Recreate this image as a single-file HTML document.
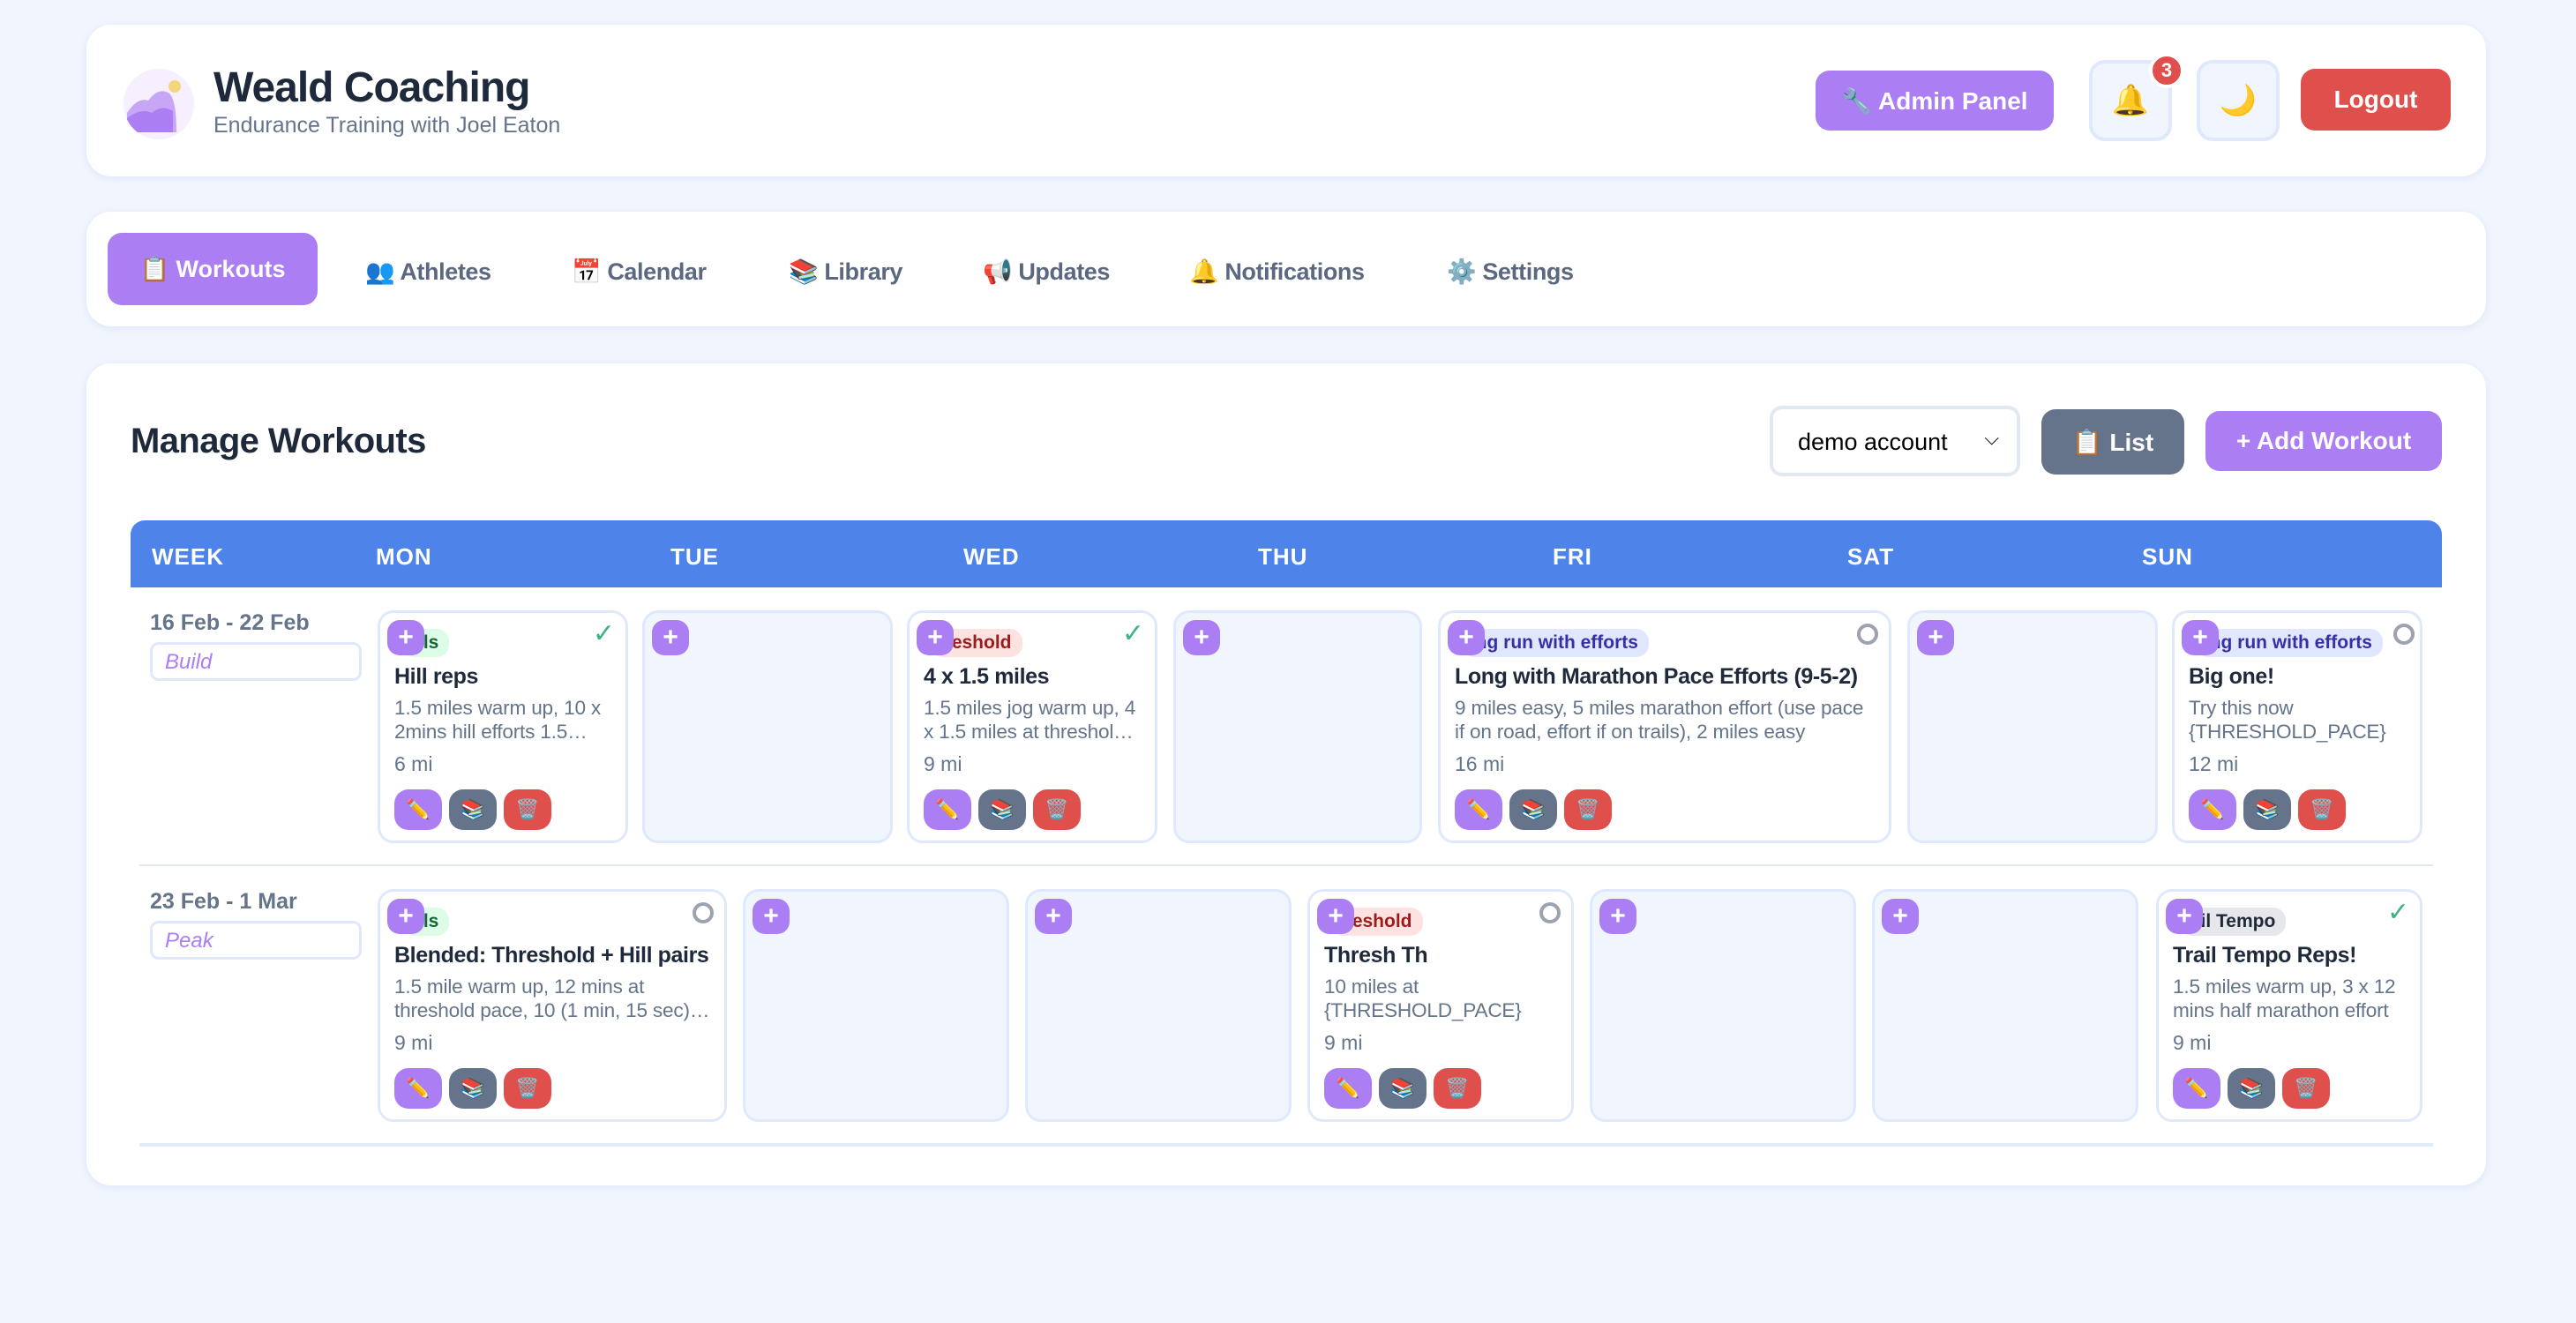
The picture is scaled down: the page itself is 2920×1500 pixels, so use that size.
<!DOCTYPE html>
<html><head><meta charset="utf-8"><style>
html{zoom:2}
*{box-sizing:border-box;margin:0;padding:0}
body{width:1460px;height:750px;background:#f0f5fe;font-family:"Liberation Sans","DejaVu Sans",sans-serif;position:relative;overflow:hidden;color:#1e293b}
.card{position:absolute;left:49px;width:1360px;background:#fff;border-radius:14px;box-shadow:0 1px 4px rgba(100,130,200,.12)}
.abs{position:absolute}
.btn{position:absolute;border-radius:8px;color:#fff;font-weight:bold;font-size:14px;display:flex;align-items:center;justify-content:center}
.tab{position:absolute;top:146px;font-size:13.5px;font-weight:bold;color:#5b6880;letter-spacing:-.2px}
.hd{position:absolute;top:308px;font-size:13px;font-weight:bold;color:#fff;letter-spacing:.5px}
.c{position:absolute;border:1.5px solid #dfe9fb;border-radius:9px;background:#fff;height:132px}
.c.e{background:#f0f5fe}
.pl{position:absolute;left:4px;top:4px;width:21px;height:20px;border-radius:7px;background:#ab7ef3;color:#fff;font-weight:bold;font-size:15px;line-height:20px;text-align:center;z-index:2}
.tg{position:absolute;left:12px;top:9px;height:16px;border-radius:7px;font-size:10.5px;font-weight:bold;line-height:16px;padding:0 6px 0 0;overflow:hidden;white-space:nowrap}
.tg span{display:inline-block}
.g{background:#dcfce7;color:#166534}.r{background:#fde2e2;color:#9b1c1c}.b{background:#e0e7ff;color:#3730a3}.n{background:#e5e7eb;color:#1f2937}
.t{position:absolute;left:8px;top:29px;font-size:12.5px;font-weight:bold;color:#1e293b;white-space:nowrap;letter-spacing:-.2px}
.d{position:absolute;left:8px;right:8px;top:47px;font-size:11.3px;line-height:13.5px;color:#64748b;display:-webkit-box;-webkit-line-clamp:2;-webkit-box-orient:vertical;overflow:hidden;letter-spacing:-.1px}
.m{position:absolute;left:8px;top:79px;font-size:11.5px;color:#64748b}
.bt{position:absolute;top:100px;left:8px;display:flex;gap:4px}
.bt i{width:27px;height:23px;border-radius:8px;font-style:normal;font-size:11px;display:flex;align-items:center;justify-content:center}
.ok{position:absolute;right:6px;top:3px;color:#3fb37f;font-size:15px;font-weight:bold}
.o{position:absolute;right:6px;top:6px;width:12px;height:12px;border:2px solid #9ca3af;border-radius:50%}
.wk{position:absolute;left:85px;font-size:12.5px;font-weight:bold;color:#64748b}
.ph{position:absolute;left:85px;width:120px;height:22px;border:1.5px solid #dfe9fb;border-radius:5px;font-size:12px;font-style:italic;color:#ab7ef3;padding:3px 7px}
</style></head><body>
<div class="card" style="top:14px;height:86px"></div>
<div class="abs" style="left:70px;top:39px;width:40px;height:40px;border-radius:50%;background:#f5efff;overflow:hidden">
<svg width="40" height="40" viewBox="0 0 40 40"><circle cx="29" cy="10" r="3.5" fill="#f6d57a"/><path d="M2 36 L2 25 Q8 16 14 18 Q20 10 26 14 Q30 18 30 36Z" fill="#c7a6f6"/><path d="M2 36 L2 28 Q10 22 16 25 Q22 20 28 24 L28 36Z" fill="#ab7ef3"/></svg></div>
<div class="abs" style="left:121px;top:36px;font-size:24px;font-weight:bold;color:#1e293b;letter-spacing:-.5px">Weald Coaching</div>
<div class="abs" style="left:121px;top:64px;font-size:12.5px;color:#64748b">Endurance Training with Joel Eaton</div>
<div class="btn" style="left:1029px;top:40px;width:135px;height:34px;background:#ab7ef3;font-size:14px">🔧 Admin Panel</div>
<div class="abs" style="left:1184px;top:34px;width:47px;height:46px;border:2px solid #dfe9fb;background:#f0f5fe;border-radius:9px;text-align:center;line-height:42px;font-size:17px;color:#d4a017">🔔</div>
<div class="abs" style="left:1218px;top:30px;width:20px;height:20px;border-radius:50%;background:#df4f4b;border:2px solid #fff;color:#fff;font-size:11px;font-weight:bold;text-align:center;line-height:16px">3</div>
<div class="abs" style="left:1245px;top:34px;width:47px;height:46px;border:2px solid #dfe9fb;background:#f0f5fe;border-radius:9px;text-align:center;line-height:42px;font-size:17px;color:#e9c53d">🌙</div>
<div class="btn" style="left:1304px;top:39px;width:85px;height:35px;background:#df504c;font-size:14px">Logout</div>

<div class="card" style="top:120px;height:65px"></div>
<div class="btn" style="left:61px;top:132px;width:119px;height:41px;background:#ab7ef3;font-size:13.5px">📋 Workouts</div>
<div class="tab" style="left:207px">👥 Athletes</div>
<div class="tab" style="left:324px">📅 Calendar</div>
<div class="tab" style="left:447px">📚 Library</div>
<div class="tab" style="left:557px">📢 Updates</div>
<div class="tab" style="left:674px">🔔 Notifications</div>
<div class="tab" style="left:820px">⚙️ Settings</div>

<div class="card" style="top:206px;height:466px"></div>
<div class="abs" style="left:74px;top:239px;font-size:20px;font-weight:bold;color:#1e293b;letter-spacing:-.3px">Manage Workouts</div>
<div class="abs" style="left:1003px;top:230px;width:142px;height:40px;border:2px solid #e2e8f0;border-radius:7px;font-size:13.5px;color:#000;padding:11px 14px">demo account<span style="position:absolute;right:10px;top:10px;font-size:11px">⌵</span></div>
<div class="btn" style="left:1157px;top:232px;width:81px;height:37px;background:#66748b;font-size:14px">📋 List</div>
<div class="btn" style="left:1250px;top:233px;width:134px;height:34px;background:#ab7ef3;font-size:14px">+ Add Workout</div>

<div class="abs" style="left:74px;top:295px;width:1310px;height:38px;background:#4e84ea;border-radius:8px 8px 0 0"></div>
<div class="hd" style="left:86px">WEEK</div><div class="hd" style="left:213px">MON</div><div class="hd" style="left:380px">TUE</div><div class="hd" style="left:546px">WED</div><div class="hd" style="left:713px">THU</div><div class="hd" style="left:880px">FRI</div><div class="hd" style="left:1047px">SAT</div><div class="hd" style="left:1214px">SUN</div>

<div class="wk" style="top:346px">16 Feb - 22 Feb</div>
<div class="ph" style="top:364px">Build</div>
<div class="abs" style="left:79px;top:490px;width:1300px;height:1px;background:#e2e8f0"></div>
<div class="wk" style="top:504px">23 Feb - 1 Mar</div>
<div class="ph" style="top:522px">Peak</div>
<div class="abs" style="left:79px;top:648px;width:1300px;height:2px;background:#e2ebf8"></div>

<!-- row1 -->
<div class="c" style="left:214px;top:346px;width:142px"><div class="pl">+</div><div class="tg g"><span style="margin-left:-1px">Hills</span></div><div class="ok">✓</div><div class="t">Hill reps</div><div class="d">1.5 miles warm up, 10 x 2mins hill efforts 1.5 miles warm down</div><div class="m">6 mi</div><div class="bt"><i style="background:#ab7ef3">✏️</i><i style="background:#66748b">📚</i><i style="background:#df504c">🗑️</i></div></div>
<div class="c e" style="left:364px;top:346px;width:142px"><div class="pl">+</div></div>
<div class="c" style="left:514px;top:346px;width:142px"><div class="pl">+</div><div class="tg r"><span style="margin-left:-5px">Threshold</span></div><div class="ok">✓</div><div class="t">4 x 1.5 miles</div><div class="d">1.5 miles jog warm up, 4 x 1.5 miles at threshold pace</div><div class="m">9 mi</div><div class="bt"><i style="background:#ab7ef3">✏️</i><i style="background:#66748b">📚</i><i style="background:#df504c">🗑️</i></div></div>
<div class="c e" style="left:665px;top:346px;width:141px"><div class="pl">+</div></div>
<div class="c" style="left:815px;top:346px;width:257px"><div class="pl">+</div><div class="tg b"><span style="margin-left:-5px">Long run with efforts</span></div><div class="o"></div><div class="t">Long with Marathon Pace Efforts (9-5-2)</div><div class="d">9 miles easy, 5 miles marathon effort (use pace if on road, effort if on trails), 2 miles easy</div><div class="m">16 mi</div><div class="bt"><i style="background:#ab7ef3">✏️</i><i style="background:#66748b">📚</i><i style="background:#df504c">🗑️</i></div></div>
<div class="c e" style="left:1081px;top:346px;width:142px"><div class="pl">+</div></div>
<div class="c" style="left:1231px;top:346px;width:142px"><div class="pl">+</div><div class="tg b"><span style="margin-left:-5px">Long run with efforts</span></div><div class="o" style="right:3px"></div><div class="t">Big one!</div><div class="d">Try this now {THRESHOLD_PACE}</div><div class="m">12 mi</div><div class="bt"><i style="background:#ab7ef3">✏️</i><i style="background:#66748b">📚</i><i style="background:#df504c">🗑️</i></div></div>

<!-- row2 -->
<div class="c" style="left:214px;top:504px;width:198px"><div class="pl">+</div><div class="tg g"><span style="margin-left:-1px">Hills</span></div><div class="o"></div><div class="t">Blended: Threshold + Hill pairs</div><div class="d">1.5 mile warm up, 12 mins at threshold pace, 10 (1 min, 15 sec) hill pairs</div><div class="m">9 mi</div><div class="bt"><i style="background:#ab7ef3">✏️</i><i style="background:#66748b">📚</i><i style="background:#df504c">🗑️</i></div></div>
<div class="c e" style="left:421px;top:504px;width:151px"><div class="pl">+</div></div>
<div class="c e" style="left:581px;top:504px;width:151px"><div class="pl">+</div></div>
<div class="c" style="left:741px;top:504px;width:151px"><div class="pl">+</div><div class="tg r"><span style="margin-left:-5px">Threshold</span></div><div class="o"></div><div class="t">Thresh Th</div><div class="d">10 miles at {THRESHOLD_PACE}</div><div class="m">9 mi</div><div class="bt"><i style="background:#ab7ef3">✏️</i><i style="background:#66748b">📚</i><i style="background:#df504c">🗑️</i></div></div>
<div class="c e" style="left:901px;top:504px;width:151px"><div class="pl">+</div></div>
<div class="c e" style="left:1061px;top:504px;width:151px"><div class="pl">+</div></div>
<div class="c" style="left:1222px;top:504px;width:151px"><div class="pl">+</div><div class="tg n"><span style="margin-left:-4px">Trail Tempo</span></div><div class="ok">✓</div><div class="t">Trail Tempo Reps!</div><div class="d">1.5 miles warm up, 3 x 12 mins half marathon effort</div><div class="m">9 mi</div><div class="bt"><i style="background:#ab7ef3">✏️</i><i style="background:#66748b">📚</i><i style="background:#df504c">🗑️</i></div></div>
</body></html>
